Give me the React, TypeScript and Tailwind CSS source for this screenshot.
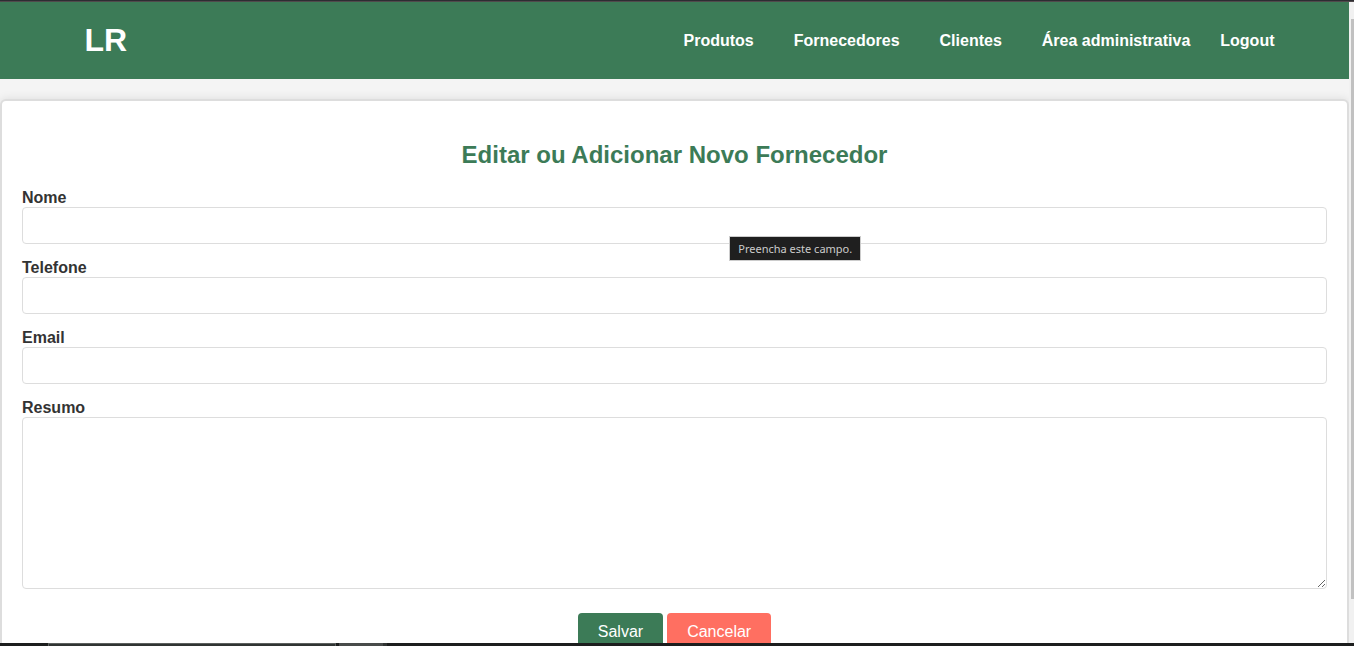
import React from 'react';

const links = ['Produtos', 'Fornecedores', 'Clientes', 'Área administrativa'];

const fields = [
  { id: 'nome', label: 'Nome', type: 'text', hint: 'Preencha este campo.' },
  { id: 'telefone', label: 'Telefone', type: 'tel' },
  { id: 'email', label: 'Email', type: 'email' },
];

const control = 'block w-full rounded border border-[#ddd] bg-white px-2.5 text-base outline-none';

function Header() {
  return (
    <header className="shrink-0 bg-[#3c7b57] text-white">
      <div className="mx-auto flex h-[77px] max-w-[1200px] items-center justify-between pl-2.5">
        <a href="#" className="pb-0.5 text-[32px] leading-9 font-bold">LR</a>
        <nav className="flex items-center gap-[30px] text-base leading-[18px] font-bold">
          <ul className="flex gap-10">
            {links.map((link) => (
              <li key={link}><a href="#">{link}</a></li>
            ))}
          </ul>
          <a href="#">Logout</a>
        </nav>
      </div>
    </header>
  );
}

function SupplierForm() {
  return (
    <form className="mt-5 grow rounded-md border-2 border-[#ddd] bg-white px-5 pt-10 shadow-[0_0_10px_rgba(0,0,0,0.1)]">
      <h1 className="text-center text-2xl leading-7 font-bold text-[#3c7b57]">Editar ou Adicionar Novo Fornecedor</h1>
      <div className="mt-5 flex flex-col gap-[15px] text-[#333]">
        {fields.map((f) => (
          <div key={f.id} className="relative">
            <label htmlFor={f.id} className="block text-base leading-[18px] font-bold">{f.label}</label>
            <input id={f.id} type={f.type} className={`${control} h-[37px]`} />
            {f.hint && (
              <span role="tooltip" className="absolute top-[47px] left-[54.2%] z-10 border border-[#ccc] bg-[#1f1f1f] px-2 font-['Noto_Sans',sans-serif] text-[11px] leading-[23px] whitespace-nowrap text-[#ccc]">
                {f.hint}
              </span>
            )}
          </div>
        ))}
        <div>
          <label htmlFor="resumo" className="block text-base leading-[18px] font-bold">Resumo</label>
          <textarea id="resumo" className={`${control} h-[172px] resize-y py-2.5`} />
        </div>
      </div>
      <div className="mt-6 flex justify-center gap-1 text-base leading-[18px] text-white">
        <button type="submit" className="rounded bg-[#3c7b57] px-5 py-2.5">Salvar</button>
        <button type="button" className="rounded bg-[#ff6f61] px-5 py-2.5">Cancelar</button>
      </div>
    </form>
  );
}

export default function App() {
  return (
    <div className="flex h-screen flex-col overflow-hidden bg-[#f4f4f4] font-['Liberation_Sans',Arial,sans-serif]">
      <div className="h-0.5 shrink-0 border-b border-[#504a4c] bg-[#2d2d32]" />
      <div className="flex min-h-0 grow">
        <main className="flex min-w-0 grow flex-col overflow-hidden">
          <Header />
          <SupplierForm />
        </main>
        <div className="w-[5px] shrink-0 bg-[#f1f1f1] pt-[17px] pb-11 pl-0.5">
          <div className="h-full bg-[#c1c1c1]" />
        </div>
      </div>
      <div className="flex h-[3px] shrink-0 bg-[#1c1e1e]">
        <div className="ml-12 w-72 border border-b-0 border-[#5c605e] bg-[#303433]" />
        <div className="ml-[3px] w-11 bg-[#484b4a]" />
        <div className="w-1 bg-[#303433]" />
      </div>
    </div>
  );
}
